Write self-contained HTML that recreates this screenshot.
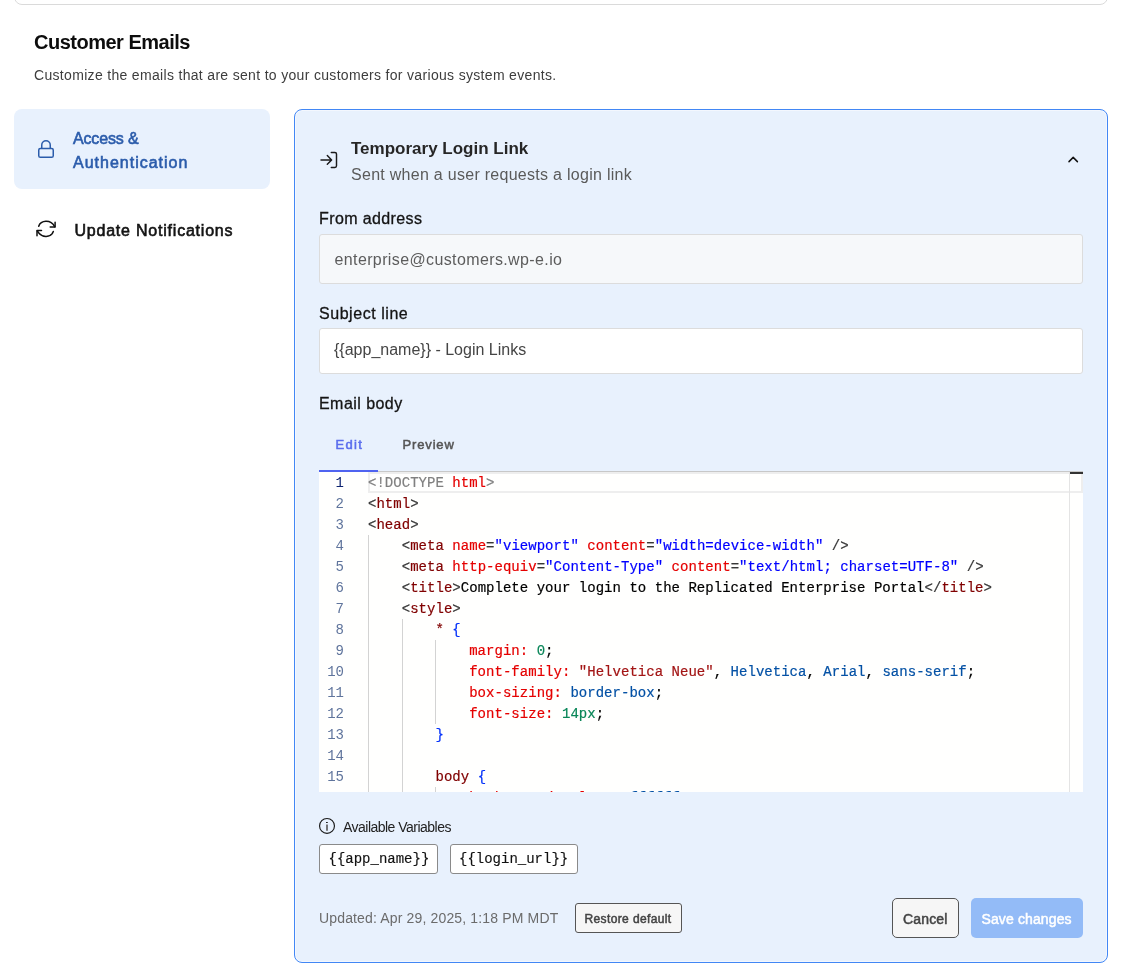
<!DOCTYPE html>
<html><head><meta charset="utf-8"><style>
html,body{margin:0;padding:0;background:#fff;width:1128px;height:980px;overflow:hidden;position:relative;}
.t{position:absolute;white-space:pre;}
body{-webkit-font-smoothing:antialiased;}
.gs{position:absolute;left:0;top:0;width:1128px;height:980px;will-change:transform;}
.b{position:absolute;}
.ln{position:absolute;left:319px;width:25px;text-align:right;font:400 14px/21px 'Liberation Mono', monospace;}
.cl{position:absolute;left:368px;white-space:pre;font:400 14px/21px 'Liberation Mono', monospace;letter-spacing:0.03px;-webkit-text-stroke:0.2px currentColor;}
.cl span{-webkit-text-stroke:0.2px currentColor;}
</style></head><body><div class="gs">
<div class="b" style="left:14px;top:-21px;width:1092px;height:24px;border:1px solid #dadada;border-radius:8px;"></div>
<div class="t" id="h1" style="left:34px;top:29.80px;font:700 20px/25px 'Liberation Sans', sans-serif;color:#0d0d0d;letter-spacing:-0.5px;">Customer Emails</div>
<div class="t" id="sub" style="left:34px;top:66.10px;font:400 14px/18px 'Liberation Sans', sans-serif;color:#3d3d3d;letter-spacing:0.32px;">Customize the emails that are sent to your customers for various system events.</div>
<div class="b" style="left:14px;top:109px;width:256px;height:80px;background:#e8f1fd;border-radius:8px;"></div>
<svg class="b" style="left:30px;top:134px" width="30" height="30" viewBox="30 134 30 30"><path d="M41.75 148.2V145A4.25 4.25 0 0 1 50.25 145V148.2" fill="none" stroke="#2b5cab" stroke-width="1.5"/><rect x="38.75" y="148.45" width="14.5" height="8.8" rx="1.6" fill="none" stroke="#2b5cab" stroke-width="1.5"/></svg>
<div class="t" id="nav1a" style="left:73px;top:128.70px;font:400 16px/20px 'Liberation Sans', sans-serif;color:#2b5cab;letter-spacing:-0.15px;-webkit-text-stroke:0.6px #2b5cab;">Access &amp;</div>
<div class="t" id="nav1b" style="left:73px;top:152.70px;font:400 16px/20px 'Liberation Sans', sans-serif;color:#2b5cab;letter-spacing:1.0px;-webkit-text-stroke:0.6px #2b5cab;">Authentication</div>
<svg class="b" style="left:30px;top:212px" width="32" height="32" viewBox="30 212 32 32"><g fill="none" stroke="#111" stroke-width="1.5" stroke-linecap="round" stroke-linejoin="round"><path d="M38.7 226.2C40.8 220.3 50.5 219 54.8 226.8"/><path d="M55.1 222.2V227.1H50.2"/><path d="M53.3 231.5C51.2 237.6 41.6 238.7 37.3 230.9"/><path d="M37 235.8V230.5H41.5"/></g></svg>
<div class="t" id="nav2" style="left:74.5px;top:220.80px;font:400 16px/20px 'Liberation Sans', sans-serif;color:#141414;letter-spacing:0.78px;-webkit-text-stroke:0.6px #141414;">Update Notifications</div>
<div class="b" style="left:294px;top:109px;width:812px;height:852px;border:1px solid #4287f5;border-radius:8px;background:#e8f1fd;box-shadow:inset 0 0 0 1px #f3f7fe;"></div>
<svg class="b" style="left:314px;top:146px" width="28" height="28" viewBox="314 146 28 28"><g fill="none" stroke="#1a1a1a" stroke-width="1.45" stroke-linecap="round" stroke-linejoin="round"><path d="M321 159.9H331.4M327.3 155.6L331.6 159.9L327.3 164.3"/><path d="M331.3 152.4H334.9Q336.5 152.4 336.5 154V165.8Q336.5 167.4 334.9 167.4H331.3"/></g></svg>
<div class="t" id="hdr" style="left:351px;top:137.80px;font:700 17px/21px 'Liberation Sans', sans-serif;color:#262626;letter-spacing:0px;">Temporary Login Link</div>
<div class="t" id="hdrsub" style="left:351px;top:165.10px;font:400 16px/20px 'Liberation Sans', sans-serif;color:#5a5a5a;letter-spacing:0.28px;">Sent when a user requests a login link</div>
<svg class="b" style="left:1060px;top:150px" width="26" height="20" viewBox="1060 150 26 20"><path d="M1069 161.6L1073.2 157.4L1077.4 161.6" fill="none" stroke="#111" stroke-width="1.5" stroke-linecap="round" stroke-linejoin="round"/></svg>
<div class="t" id="lbl1" style="left:319px;top:209.30px;font:400 16px/20px 'Liberation Sans', sans-serif;color:#141414;letter-spacing:0.39px;-webkit-text-stroke:0.3px #141414;">From address</div>
<div class="b" style="left:319px;top:234px;width:762px;height:48px;border:1px solid #dcdcdc;border-radius:3px;background:#f6f8fa;"></div>
<div class="t" id="in1" style="left:334.5px;top:249.80px;font:400 16px/20px 'Liberation Sans', sans-serif;color:#5c5c5c;letter-spacing:0.38px;">enterprise@customers.wp-e.io</div>
<div class="t" id="lbl2" style="left:319px;top:303.70px;font:400 16px/20px 'Liberation Sans', sans-serif;color:#141414;letter-spacing:0.55px;-webkit-text-stroke:0.3px #141414;">Subject line</div>
<div class="b" style="left:319px;top:328px;width:762px;height:44px;border:1px solid #dcdcdc;border-radius:3px;background:#fff;"></div>
<div class="t" id="in2" style="left:334px;top:340.00px;font:400 16px/20px 'Liberation Sans', sans-serif;color:#454545;letter-spacing:0px;">{{app_name}} - Login Links</div>
<div class="t" id="lbl3" style="left:319px;top:393.90px;font:400 16px/20px 'Liberation Sans', sans-serif;color:#141414;letter-spacing:0.45px;-webkit-text-stroke:0.3px #141414;">Email body</div>
<div class="t" id="tab1" style="left:335.5px;top:437.00px;font:400 13px/16px 'Liberation Sans', sans-serif;color:#5a6ded;letter-spacing:1.3px;-webkit-text-stroke:0.55px #5a6ded;">Edit</div>
<div class="t" id="tab2" style="left:402.5px;top:437.00px;font:400 13px/16px 'Liberation Sans', sans-serif;color:#555;letter-spacing:0.85px;-webkit-text-stroke:0.5px #555;">Preview</div>
<div class="b" style="left:319px;top:471px;width:764px;height:321px;background:#fffffe;border-top:1px solid #c8c8c8;box-sizing:border-box;"></div>
<div class="b" style="left:319px;top:470px;width:59px;height:2px;background:#4f63f0;"></div>
<div class="b" style="left:0;top:0;width:1128px;height:792px;overflow:hidden;clip-path:inset(472px 45px 0 319px);"><div class="b" style="left:368px;top:472px;width:715px;height:21px;box-sizing:border-box;border:2px solid #eeeeee;"></div><div class="b" style="left:368px;top:535px;width:1px;height:273px;background:#d3d3d3;"></div><div class="b" style="left:402px;top:619px;width:1px;height:189px;background:#d3d3d3;"></div><div class="b" style="left:435px;top:640px;width:1px;height:84px;background:#d3d3d3;"></div><div class="b" style="left:435px;top:787px;width:1px;height:21px;background:#d3d3d3;"></div><div class="ln" style="top:473px;color:#0b216f">1</div><div class="cl" style="top:473px"><span style="color:#808080">&lt;!DOCTYPE </span><span style="color:#e50000">html</span><span style="color:#808080">&gt;</span></div><div class="ln" style="top:494px;color:#5f749c">2</div><div class="cl" style="top:494px"><span style="color:#383838">&lt;</span><span style="color:#800000">html</span><span style="color:#383838">&gt;</span></div><div class="ln" style="top:515px;color:#5f749c">3</div><div class="cl" style="top:515px"><span style="color:#383838">&lt;</span><span style="color:#800000">head</span><span style="color:#383838">&gt;</span></div><div class="ln" style="top:536px;color:#5f749c">4</div><div class="cl" style="top:536px"><span style="color:#000000">    </span><span style="color:#383838">&lt;</span><span style="color:#800000">meta</span><span style="color:#000000"> </span><span style="color:#e50000">name</span><span style="color:#383838">=</span><span style="color:#0000ff">&quot;viewport&quot;</span><span style="color:#000000"> </span><span style="color:#e50000">content</span><span style="color:#383838">=</span><span style="color:#0000ff">&quot;width=device-width&quot;</span><span style="color:#000000"> </span><span style="color:#383838">/&gt;</span></div><div class="ln" style="top:557px;color:#5f749c">5</div><div class="cl" style="top:557px"><span style="color:#000000">    </span><span style="color:#383838">&lt;</span><span style="color:#800000">meta</span><span style="color:#000000"> </span><span style="color:#e50000">http-equiv</span><span style="color:#383838">=</span><span style="color:#0000ff">&quot;Content-Type&quot;</span><span style="color:#000000"> </span><span style="color:#e50000">content</span><span style="color:#383838">=</span><span style="color:#0000ff">&quot;text/html; charset=UTF-8&quot;</span><span style="color:#000000"> </span><span style="color:#383838">/&gt;</span></div><div class="ln" style="top:578px;color:#5f749c">6</div><div class="cl" style="top:578px"><span style="color:#000000">    </span><span style="color:#383838">&lt;</span><span style="color:#800000">title</span><span style="color:#383838">&gt;</span><span style="color:#000000">Complete your login to the Replicated Enterprise Portal</span><span style="color:#383838">&lt;/</span><span style="color:#800000">title</span><span style="color:#383838">&gt;</span></div><div class="ln" style="top:599px;color:#5f749c">7</div><div class="cl" style="top:599px"><span style="color:#000000">    </span><span style="color:#383838">&lt;</span><span style="color:#800000">style</span><span style="color:#383838">&gt;</span></div><div class="ln" style="top:620px;color:#5f749c">8</div><div class="cl" style="top:620px"><span style="color:#000000">        </span><span style="color:#800000">*</span><span style="color:#000000"> </span><span style="color:#0431fa">{</span></div><div class="ln" style="top:641px;color:#5f749c">9</div><div class="cl" style="top:641px"><span style="color:#000000">            </span><span style="color:#e50000">margin:</span><span style="color:#000000"> </span><span style="color:#098658">0</span><span style="color:#000000">;</span></div><div class="ln" style="top:662px;color:#5f749c">10</div><div class="cl" style="top:662px"><span style="color:#000000">            </span><span style="color:#e50000">font-family:</span><span style="color:#000000"> </span><span style="color:#a31515">&quot;Helvetica Neue&quot;</span><span style="color:#000000">, </span><span style="color:#0451a5">Helvetica</span><span style="color:#000000">, </span><span style="color:#0451a5">Arial</span><span style="color:#000000">, </span><span style="color:#0451a5">sans-serif</span><span style="color:#000000">;</span></div><div class="ln" style="top:683px;color:#5f749c">11</div><div class="cl" style="top:683px"><span style="color:#000000">            </span><span style="color:#e50000">box-sizing:</span><span style="color:#000000"> </span><span style="color:#0451a5">border-box</span><span style="color:#000000">;</span></div><div class="ln" style="top:704px;color:#5f749c">12</div><div class="cl" style="top:704px"><span style="color:#000000">            </span><span style="color:#e50000">font-size:</span><span style="color:#000000"> </span><span style="color:#098658">14px</span><span style="color:#000000">;</span></div><div class="ln" style="top:725px;color:#5f749c">13</div><div class="cl" style="top:725px"><span style="color:#000000">        </span><span style="color:#0431fa">}</span></div><div class="ln" style="top:746px;color:#5f749c">14</div><div class="ln" style="top:767px;color:#5f749c">15</div><div class="cl" style="top:767px"><span style="color:#000000">        </span><span style="color:#800000">body</span><span style="color:#000000"> </span><span style="color:#0431fa">{</span></div><div class="ln" style="top:788px;color:#5f749c">16</div><div class="cl" style="top:788px"><span style="color:#000000">            </span><span style="color:#e50000">background-color:</span><span style="color:#000000"> </span><span style="color:#0451a5">#ffffff</span><span style="color:#000000">;</span></div><div class="b" style="left:1069px;top:472px;width:1px;height:320px;background:#e4e4e4;"></div><div class="b" style="left:1070px;top:472px;width:13px;height:2px;background:#333;"></div></div>
<svg class="b" style="left:314px;top:812px" width="28" height="28" viewBox="314 812 28 28"><circle cx="327" cy="825.9" r="7.45" fill="none" stroke="#1a1a1a" stroke-width="1.15"/><path d="M327 824.6V830.8" stroke="#555" stroke-width="1.6"/><path d="M326 822.5H327.8" stroke="#222" stroke-width="1"/></svg>
<div class="t" id="avail" style="left:343px;top:817.50px;font:400 14px/18px 'Liberation Sans', sans-serif;color:#222;letter-spacing:-0.52px;">Available Variables</div>
<div class="b" style="left:319px;top:844px;width:117px;height:28px;border:1px solid #8a8a8a;border-radius:3px;background:#fff;"></div>
<div class="t" id="chip1" style="left:328.5px;top:850.00px;font:400 14px/18px 'Liberation Mono', monospace;color:#111;letter-spacing:0px;-webkit-text-stroke:0.15px #111;">{{app_name}}</div>
<div class="b" style="left:450px;top:844px;width:126px;height:28px;border:1px solid #8a8a8a;border-radius:3px;background:#fff;"></div>
<div class="t" id="chip2" style="left:459px;top:850.00px;font:400 14px/18px 'Liberation Mono', monospace;color:#111;letter-spacing:0px;-webkit-text-stroke:0.15px #111;">{{login_url}}</div>
<div class="t" id="upd" style="left:319px;top:909.40px;font:400 14px/18px 'Liberation Sans', sans-serif;color:#6b6b6b;letter-spacing:0.15px;">Updated: Apr 29, 2025, 1:18 PM MDT</div>
<div class="b" style="left:575px;top:903px;width:105px;height:28px;border:1px solid #555;border-radius:3px;background:#f6f6f6;"></div>
<div class="t" id="restore" style="left:584.5px;top:911.80px;font:400 12px/15px 'Liberation Sans', sans-serif;color:#444;letter-spacing:0.38px;-webkit-text-stroke:0.5px #444;">Restore default</div>
<div class="b" style="left:892px;top:898px;width:65px;height:38px;border:1px solid #555;border-radius:5px;background:#f6f6f6;"></div>
<div class="t" id="cancel" style="left:903px;top:909.80px;font:400 14px/18px 'Liberation Sans', sans-serif;color:#444;letter-spacing:0.15px;-webkit-text-stroke:0.5px #444;">Cancel</div>
<div class="b" style="left:971px;top:898px;width:112px;height:40px;border-radius:5px;background:#93bbf7;"></div>
<div class="t" id="save" style="left:981.5px;top:909.50px;font:400 14px/18px 'Liberation Sans', sans-serif;color:#fff;letter-spacing:0.12px;-webkit-text-stroke:0.5px #fff;">Save changes</div>
</div></body></html>
